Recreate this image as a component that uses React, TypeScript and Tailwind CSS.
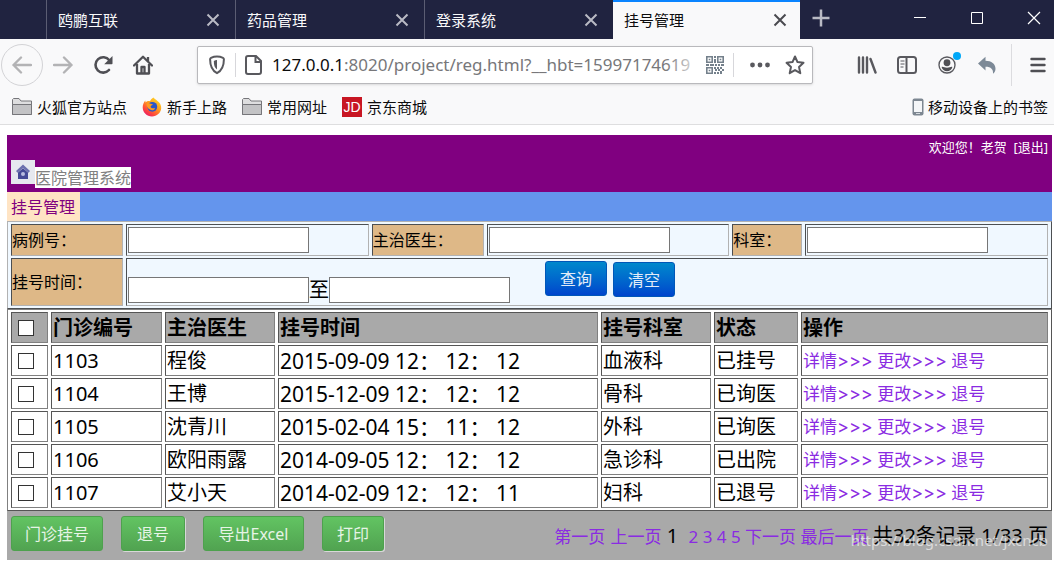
import type { ReactNode } from "react";
import clsx from "clsx";

type Registration = {
  id: string;
  doctor: string;
  time: string;
  department: string;
  status: string;
};

const registrations: Registration[] = [
  { id: "1103", doctor: "程俊", time: "2015-09-09 12： 12： 12", department: "血液科", status: "已挂号" },
  { id: "1104", doctor: "王博", time: "2015-12-09 12： 12： 12", department: "骨科", status: "已询医" },
  { id: "1105", doctor: "沈青川", time: "2015-02-04 15： 11： 12", department: "外科", status: "已询医" },
  { id: "1106", doctor: "欧阳雨露", time: "2014-09-05 12： 12： 12", department: "急诊科", status: "已出院" },
  { id: "1107", doctor: "艾小天", time: "2014-02-09 12： 12： 11", department: "妇科", status: "已退号" },
];

const tabs = ["鸥鹏互联", "药品管理", "登录系统", "挂号管理"];

type IconButtonProps = {
  label: string;
  className?: string;
  children: ReactNode;
};

function IconButton({ label, className, children }: IconButtonProps) {
  return (
    <button
      type="button"
      aria-label={label}
      className={clsx("flex shrink-0 items-center justify-center", className)}
    >
      {children}
    </button>
  );
}

function TabBar() {
  return (
    <div className="flex h-[39px] bg-[#202340] text-[15px] text-[#f9f9fa]">
      <div className="w-[46px] shrink-0" />
      {tabs.map((tab, i) => {
        const active = i === tabs.length - 1;
        return (
          <div
            key={tab}
            className={clsx(
              "flex items-center justify-between",
              active
                ? "w-[187px] border-t-2 border-[#0a84ff] bg-[#f9f9fa] pr-2.5 pb-0.5 pl-[11px] text-[#0c0c0d]"
                : "w-[189px] border-l border-[#5b5d73] pr-3 pl-[11px]"
            )}
          >
            <span className="leading-6">{tab}</span>
            <IconButton label={`关闭 ${tab}`} className="size-5">
              <svg
                viewBox="0 0 20 20"
                className={clsx("size-5 fill-none stroke-2", active ? "stroke-[#4a4a4f]" : "stroke-[#b9bac4]")}
              >
                <path d="M4.500 4.500l11 11M15.500 4.500l-11 11" />
              </svg>
            </IconButton>
          </div>
        );
      })}
      <IconButton label="新标签页" className="h-9 w-[42px]">
        <svg viewBox="0 0 20 20" className="size-5 fill-none stroke-[#b9bac4] stroke-[2.5]">
          <path d="M10 1.500v17M1.500 10h17" />
        </svg>
      </IconButton>
      <div className="ml-auto flex h-9">
        <IconButton label="最小化" className="w-14">
          <svg viewBox="0 0 14 14" className="size-3.5 fill-none stroke-white">
            <path d="M1 6.500h12" />
          </svg>
        </IconButton>
        <IconButton label="最大化" className="w-[58px]">
          <svg viewBox="0 0 14 14" className="size-3.5 fill-none stroke-white">
            <path d="M1.500 1.500h11v11h-11z" />
          </svg>
        </IconButton>
        <IconButton label="关闭窗口" className="mr-[-8px] w-14">
          <svg viewBox="0 0 14 14" className="size-3.5 fill-none stroke-white stroke-[1.2]">
            <path d="M1 1l12 12M13 1L1 13" />
          </svg>
        </IconButton>
      </div>
    </div>
  );
}

function QrIcon() {
  return (
    <svg viewBox="0 0 18 18" className="size-[18px]">
      <g className="fill-none stroke-[#74808b] stroke-[1.6]">
        <path d="M.8.8h5.400v5.400H.8zM11.800.8h5.400v5.400h-5.400zM.8 11.800h5.400v5.400H.8z" />
      </g>
      <g className="fill-[#74808b]">
        <path d="M2.700 2.700h1.600v1.600H2.700zM13.700 2.700h1.600v1.600h-1.600zM2.700 13.700h1.600v1.600H2.700z" />
        <path d="M8 0h2v2H8zM8 3h2v4H8zM0 8h3v2H0zM4 8h4v2H4zM9 8h2v2H9zM12 8h2v2h-2zM15 8h3v2h-3zM8 11h2v2H8zM11 11h2v2h-2zM14 11h2v2h-2zM9 13h2v2H9zM12 13h2v2h-2zM16 13h2v2h-2zM8 16h2v2H8zM11 16h2v2h-2zM14 15h2v3h-2z" />
      </g>
    </svg>
  );
}

function AddressBar() {
  return (
    <div className="mx-auto flex h-[38px] w-[616px] items-center rounded-xs border border-[#b9b9bc] bg-white shadow-sm">
      <IconButton label="跟踪保护" className="w-[37px]">
        <svg viewBox="0 0 18 20" className="h-5 w-[18px]">
          <path
            d="M9 1.600c2.200 0 4.300.5 6 1.300.6.300.9.700.9 1.300 0 6.500-1.300 11-6.900 14C3.400 15.200 2.100 10.700 2.100 4.200c0-.6.300-1 .9-1.300C4.700 2.100 6.800 1.600 9 1.600z"
            className="fill-none stroke-[#59595e] stroke-2"
          />
          <path d="M9 5v9.500c-2.400-1.700-3.200-4.600-3.200-8.600C6.800 5.300 7.900 5 9 5z" className="fill-[#59595e]" />
        </svg>
      </IconButton>
      <div className="h-6 w-px bg-[#d7d7db]" />
      <IconButton label="网站信息" className="w-9">
        <svg viewBox="0 0 20 20" className="size-5 fill-none stroke-[#59595e] stroke-2">
          <path d="M4 1h8l5 5v11a2 2 0 0 1-2 2H4a2 2 0 0 1-2-2V3a2 2 0 0 1 2-2zM11.500 1.500V7H17" />
        </svg>
      </IconButton>
      <div className="relative min-w-0 flex-1 overflow-hidden text-[17px] leading-7 whitespace-nowrap text-[#77777a]">
        <span className="text-[#0c0c0d]">127.0.0.1</span>
        :8020/project/reg.html?__hbt=15997174619
        <div className="absolute inset-y-0 right-0 w-10 bg-linear-to-r from-transparent to-white" />
      </div>
      <IconButton label="二维码" className="w-5">
        <QrIcon />
      </IconButton>
      <div className="ml-2 h-6 w-px bg-[#d7d7db]" />
      <IconButton label="页面操作" className="ml-3 w-7">
        <svg viewBox="0 0 20 6" className="h-1.5 w-5 fill-[#59595e]">
          <circle cx="2.500" cy="3" r="2.400" />
          <circle cx="10" cy="3" r="2.400" />
          <circle cx="17.500" cy="3" r="2.400" />
        </svg>
      </IconButton>
      <IconButton label="收藏" className="mr-[5px] ml-[9px] w-6">
        <svg viewBox="0 0 20 20" className="size-5 fill-none stroke-[#59595e] stroke-2 [stroke-linejoin:round]">
          <path d="M10 1.500l2.500 5.600 6 .7-4.500 4.100 1.300 6.300L10 15.100l-5.300 3.100L6 11.900 1.500 7.800l6-.7z" />
        </svg>
      </IconButton>
    </div>
  );
}

function Toolbar() {
  return (
    <div className="flex h-[51px] items-center bg-[#f9f9fa]">
      <IconButton label="后退" className="ml-px size-[42px] rounded-full border border-[#d3d3d6]">
        <svg
          viewBox="0 0 20 20"
          className="size-5 fill-none stroke-[#b3b3b5] stroke-[2.4] [stroke-linecap:round] [stroke-linejoin:round]"
        >
          <path d="M19 10H1.500M9 2.500L1.500 10 9 17.500" />
        </svg>
      </IconButton>
      <IconButton label="前进" className="w-10">
        <svg
          viewBox="0 0 20 20"
          className="size-5 fill-none stroke-[#b3b3b5] stroke-[2.4] [stroke-linecap:round] [stroke-linejoin:round]"
        >
          <path d="M1 10h17.500M11 2.500l7.500 7.500-7.500 7.500" />
        </svg>
      </IconButton>
      <IconButton label="刷新" className="w-10">
        <svg viewBox="0 0 20 20" className="size-5">
          <path
            d="M16.300 5.200A7.700 7.700 0 1 0 16 15"
            className="fill-none stroke-[#4f4f54] stroke-[2.6] [stroke-linecap:round]"
          />
          <path d="M19.500 1v7.500a.8.8 0 0 1-.8.800h-7.500z" className="fill-[#4f4f54]" />
        </svg>
      </IconButton>
      <IconButton label="主页" className="w-10">
        <svg viewBox="0 0 20 20" className="size-5 fill-none stroke-[#4f4f54] stroke-[2.3] [stroke-linejoin:round]">
          <path d="M1 10.500L10 1.700l9 8.800" className="[stroke-linecap:round]" />
          <path d="M4 9v9.500h12V9" />
          <path d="M8.500 18v-6h3v6" />
          <path d="M15 2v4" />
        </svg>
      </IconButton>
      <AddressBar />
      <div className="flex items-center">
        <IconButton label="书库" className="w-10">
          <svg viewBox="0 0 20 20" className="size-5 fill-none stroke-[#59595e] stroke-[2.4] [stroke-linecap:round]">
            <path d="M2 2.500v15M6 2.500v15M10 2.500v15M13.500 4l5 13.500" />
          </svg>
        </IconButton>
        <IconButton label="侧栏" className="w-10">
          <svg viewBox="0 0 20 18" className="h-[18px] w-5 fill-none stroke-[#59595e] stroke-2">
            <rect x="1" y="1" width="18" height="16" rx="2.500" />
            <path d="M9.500 1v16" />
            <path d="M3.500 5h4M3.500 8h4M3.500 11h3" className="stroke-1" />
          </svg>
        </IconButton>
        <IconButton label="账户" className="relative w-10">
          <svg viewBox="0 0 20 20" className="size-[18px]">
            <circle cx="10" cy="10" r="8.900" className="fill-none stroke-[#59595e] stroke-[1.5]" />
            <circle cx="10" cy="7.500" r="3.800" className="fill-[#4f4f54]" />
            <path d="M4 12.200c1.500-.8 3 .8 6 .8s4.500-1.600 6-.8c-.6 2.800-3 4.800-6 4.800s-5.400-2-6-4.800z" className="fill-[#4f4f54]" />
          </svg>
          <span className="absolute -top-1 right-1.5 size-2 rounded-full bg-[#00a8f8]" />
        </IconButton>
        <IconButton label="撤销" className="w-10">
          <svg viewBox="0 0 20 20" className="size-5 fill-[#7d8a97]">
            <path d="M1 8.500L8.500 1.800v4c6 0 10 3 10 8 0 1.900-.8 3.600-2.500 5 .4-4.300-1.800-7-7.500-7v3.700z" />
          </svg>
        </IconButton>
        <div className="ml-1 h-[42px] w-px bg-[#dcdcdf]" />
        <IconButton label="菜单" className="ml-2.5 w-8">
          <svg
            viewBox="0 0 16 16"
            className="size-4 fill-none stroke-[#4f4f54] stroke-[2.4] [stroke-linecap:round]"
          >
            <path d="M1.500 2h13M1.500 8h13M1.500 14h13" />
          </svg>
        </IconButton>
      </div>
    </div>
  );
}

function FolderIcon() {
  return (
    <svg viewBox="0 0 20 18" className="h-[18px] w-5 stroke-[#76767a]">
      <path d="M.5 16.500v-15l1-1h5.500l2 2.500h10.500v13.500z" className="fill-[#dededf]" />
      <path d="M.5 6.500h19v10H.5z" className="fill-[#c3c3c5]" />
    </svg>
  );
}

function FirefoxIcon() {
  return (
    <svg viewBox="0 0 20 20" className="size-5">
      <defs>
        <linearGradient id="fox" x1="0.9" y1="0" x2="0.2" y2="1">
          <stop offset="0" stopColor="#ffe226" />
          <stop offset="0.45" stopColor="#ff9a1f" />
          <stop offset="0.75" stopColor="#ff4a3b" />
          <stop offset="1" stopColor="#e5186e" />
        </linearGradient>
      </defs>
      <path
        d="M11.500.5c1 1.500 2.500 2 4 3.500 2.500 2 3.900 4.200 3.700 7.300-.4 4.700-4.300 8.200-9.200 8.200-5.200 0-9.300-3.800-9.300-8.900 0-2.900 1-5.200 2.600-7.100l.3 2C5 4.200 6.500 3.900 8 4.200 8.800 2.500 10 1.300 11.500.5z"
        fill="url(#fox)"
      />
      <circle cx="10.300" cy="9.800" r="4.900" className="fill-[#2c55c8]" />
      <path
        d="M4.500 6.500c1.200-.8 2.800-.6 4 .3l2.300.4c-.1 1-1.300 1.200-1.900 1.700-.5.5-.2 1.300.3 1.900 1 1 2.700.2 4 .6-1 1.900-3.400 2.300-5.300 1.200-2.300-1.300-3.600-3.300-3.400-6.100z"
        className="fill-[#ff9a1f]"
      />
    </svg>
  );
}

function Bookmarks() {
  const link = "flex items-center gap-[5px]";
  return (
    <nav className="flex h-[35px] items-center gap-[15px] border-b border-[#dededf] bg-[#f9f9fa] pr-1.5 pl-3 text-[15px] leading-6 text-[#0c0c0d]">
      <a href="#" className={link}>
        <FolderIcon />
        火狐官方站点
      </a>
      <a href="#" className={link}>
        <FirefoxIcon />
        新手上路
      </a>
      <a href="#" className={link}>
        <FolderIcon />
        常用网址
      </a>
      <a href="#" className={link}>
        <span className="flex size-5 items-center justify-center bg-[#c81623] font-['Liberation_Sans'] text-sm text-white">
          JD
        </span>
        京东商城
      </a>
      <a href="#" className="ml-auto flex items-center gap-1">
        <svg viewBox="0 0 12 18" className="h-[18px] w-3">
          <rect x=".5" y=".5" width="11" height="17" rx="2" className="fill-[#7d8791]" />
          <path d="M2 3h8v11H2z" className="fill-[#f4f6f8]" />
          <path d="M4 15.500h4" className="stroke-[#d5dade]" />
        </svg>
        移动设备上的书签
      </a>
    </nav>
  );
}

function PageHeader() {
  return (
    <header>
      <div className="bg-[#800080] px-1 pb-1">
        <div className="h-[25px] text-right text-[13px] leading-[25px] text-white">
          欢迎您！老贺&nbsp; <a href="#">[退出]</a>
        </div>
        <div className="flex h-7 items-end">
          <div className="mb-1 flex size-6 items-center justify-center bg-[#e6e8ef]">
            <svg viewBox="0 0 16 16" className="size-4">
              <path d="M8 .5l7 6.500-1.500 1.800L8 4 2.500 8.800 1 7z" className="fill-[#6c70ae]" />
              <path d="M3 8.500l5-4.300 5 4.300V15H3z" className="fill-[#454a96]" />
              <circle cx="8" cy="10" r="2" className="fill-[#b9bce0]" />
            </svg>
          </div>
          <span className="bg-white pt-px text-base leading-5 text-[#808080]">医院管理系统</span>
        </div>
      </div>
      <nav className="flex h-[29px] bg-[#6495ed]">
        <a href="#" className="bg-[#ffe4c4] pt-px pr-[5px] pl-1 text-base leading-7 text-[#800080]">
          挂号管理
        </a>
      </nav>
    </header>
  );
}

const cellBorder = "border border-t-[#4c4f52] border-r-[#b2b2b2] border-b-[#b2b2b2] border-l-[#4c4f52]";
const textInput = "h-[26px] w-[181px] border border-[#767676] bg-white px-1 text-base";
const blueButton =
  "h-[35px] w-[62px] rounded-[3px] border border-[#0057b8] bg-linear-to-b from-[#0088cc] to-[#0044cc] text-base text-[#e3ecf8]";

function SearchForm() {
  const labelCell = clsx(cellBorder, "bg-[#deb887] p-0 text-left text-base font-normal");
  const fieldCell = clsx(cellBorder, "bg-[#f0f8ff] p-0 px-px");
  return (
    <form>
      <table className="w-full table-fixed border-separate border-spacing-x-[3px] border-spacing-y-0.5 border border-t-[#b2b2b2] border-r-[#4c4f52] border-b-[#4c4f52] border-l-[#b2b2b2] bg-[#f0f8ff]">
        <colgroup>
          <col className="w-28" />
          <col />
          <col className="w-28" />
          <col />
          <col className="w-[70px]" />
          <col />
        </colgroup>
        <tbody>
          <tr className="h-8">
            <th className={labelCell}>
              <label htmlFor="caseNo">病例号：</label>
            </th>
            <td className={fieldCell}>
              <input id="caseNo" type="text" className={clsx(textInput, "block")} />
            </td>
            <th className={labelCell}>
              <label htmlFor="doctor">主治医生：</label>
            </th>
            <td className={fieldCell}>
              <input id="doctor" type="text" className={clsx(textInput, "block")} />
            </td>
            <th className={labelCell}>
              <label htmlFor="department">科室：</label>
            </th>
            <td className={fieldCell}>
              <input id="department" type="text" className={clsx(textInput, "block")} />
            </td>
          </tr>
          <tr className="h-12">
            <th className={labelCell}>
              <label htmlFor="startTime">挂号时间：</label>
            </th>
            <td colSpan={5} className={fieldCell}>
              <div className="flex h-[46px] items-end pb-0.5">
                <input id="startTime" type="text" className={textInput} />
                <label htmlFor="endTime" className="text-xl leading-[26px]">
                  至
                </label>
                <input id="endTime" type="text" className={textInput} />
                <button type="button" className={clsx(blueButton, "mt-0.5 ml-[35px] self-start")}>
                  查询
                </button>
                <button type="reset" className={clsx(blueButton, "mt-[3px] ml-1.5 self-start")}>
                  清空
                </button>
              </div>
            </td>
          </tr>
        </tbody>
      </table>
    </form>
  );
}

function RowCheckbox({ label }: { label: string }) {
  return (
    <input
      type="checkbox"
      aria-label={label}
      className="ml-[5px] block size-4 appearance-none border border-[#333] bg-white checked:bg-[#333]"
    />
  );
}

function Arrows() {
  return <span className="font-['Inter'] text-lg leading-5">&gt;&gt;&gt;</span>;
}

function RegistrationTable() {
  const cell = "h-[31px] border border-t-[#555] border-r-[#808080] border-b-[#808080] border-l-[#555] p-0 px-px";
  const head = clsx(cell, "bg-[#a9a9a9] text-left font-bold");
  return (
    <table className="w-full table-fixed border-separate border-spacing-x-[3px] border-spacing-y-0.5 border border-t-[#808080] border-r-[#555] border-b-[#555] border-l-[#808080] bg-white text-xl leading-7">
      <colgroup>
        <col className="w-[37px]" />
        <col className="w-[111px]" />
        <col className="w-[110px]" />
        <col className="w-[320px]" />
        <col className="w-[110px]" />
        <col className="w-[84px]" />
        <col />
      </colgroup>
      <thead>
        <tr>
          <th className={head}>
            <RowCheckbox label="全选" />
          </th>
          <th className={head}>门诊编号</th>
          <th className={head}>主治医生</th>
          <th className={head}>挂号时间</th>
          <th className={head}>挂号科室</th>
          <th className={head}>状态</th>
          <th className={head}>操作</th>
        </tr>
      </thead>
      <tbody>
        {registrations.map((item) => (
          <tr key={item.id}>
            <td className={cell}>
              <RowCheckbox label={item.id} />
            </td>
            <td className={cell}>{item.id}</td>
            <td className={cell}>{item.doctor}</td>
            <td className={clsx(cell, "text-[21px]")}>{item.time}</td>
            <td className={cell}>{item.department}</td>
            <td className={cell}>{item.status}</td>
            <td className={clsx(cell, "text-[17px] text-[#8a2be2]")}>
              <a href="#">
                详情
                <Arrows />
              </a>{" "}
              <a href="#">
                更改
                <Arrows />
              </a>{" "}
              <a href="#">退号</a>
            </td>
          </tr>
        ))}
      </tbody>
    </table>
  );
}

function TableFooter() {
  const button =
    "h-[35px] rounded-[3px] border border-[#4ea14e] bg-linear-to-b from-[#62c462] to-[#51a351] text-base text-[#e6f4e6]";
  const raised = "shadow-[1px_1px_0_#d8d8d8]";
  const link = "text-[17px] text-[#8a2be2]";
  return (
    <footer className="flex h-[49px] items-start justify-between bg-[#a9a9a9] px-1 pt-[5px]">
      <div className="flex gap-[18px]">
        <button type="button" className={clsx(button, "w-[92px]")}>
          门诊挂号
        </button>
        <button type="button" className={clsx(button, raised, "w-16")}>
          退号
        </button>
        <button type="button" className={clsx(button, "w-[101px]")}>
          导出Excel
        </button>
        <button type="button" className={clsx(button, raised, "w-[62px]")}>
          打印
        </button>
      </div>
      <div className="relative pt-1.5 text-xl leading-7 whitespace-nowrap">
        <a href="#" className={link}>第一页</a> <a href="#" className={link}>上一页</a> 1&nbsp;{" "}
        <span className={link}>
          <a href="#">2</a> <a href="#">3</a> <a href="#">4</a> <a href="#">5</a>{" "}
          <a href="#">下一页</a> <a href="#">最后一页</a>{" "}
        </span>
        共32条记录 1/33 页
        <span className="pointer-events-none absolute top-3 right-0 text-[15px] leading-6 text-white/60">
          https://blog.csdn.net/jxcncb
        </span>
      </div>
    </footer>
  );
}

export default function App() {
  return (
    <div className="bg-white font-['Noto_Sans','Noto_Sans_CJK_SC',sans-serif] text-black">
      <TabBar />
      <Toolbar />
      <Bookmarks />
      <main className="mt-2.5 mr-0.5 ml-[7px]">
        <PageHeader />
        <SearchForm />
        <RegistrationTable />
        <TableFooter />
      </main>
    </div>
  );
}
